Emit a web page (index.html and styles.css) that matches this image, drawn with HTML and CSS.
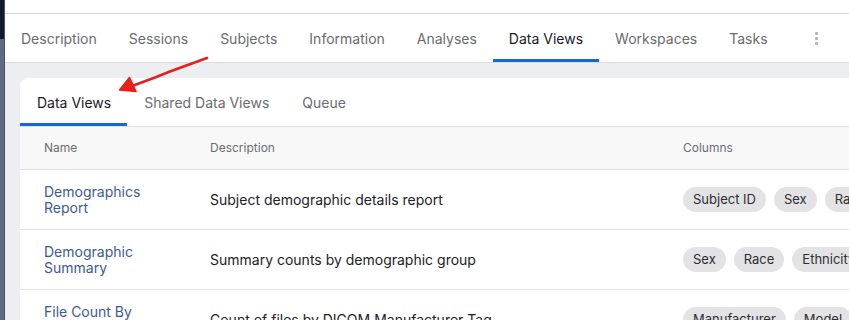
FILE: index.html
```html
<!DOCTYPE html>
<html lang="en">
<head>
<meta charset="utf-8">
<title>Data Views</title>
<link rel="stylesheet" href="styles.css">
</head>
<body>
<div class="app">
  <aside class="rail"><div class="rail-top"></div></aside>
  <main class="main">
    <div class="topbar"></div>
    <nav class="tabs">
      <a class="tab">Description</a>
      <a class="tab">Sessions</a>
      <a class="tab">Subjects</a>
      <a class="tab">Information</a>
      <a class="tab">Analyses</a>
      <a class="tab active">Data Views</a>
      <a class="tab">Workspaces</a>
      <a class="tab">Tasks</a>
      <a class="tab more"><span class="kebab"><i></i><i></i><i></i></span></a>
    </nav>
    <section class="content">
      <div class="card">
        <nav class="subtabs">
          <a class="subtab active">Data Views</a>
          <a class="subtab">Shared Data Views</a>
          <a class="subtab">Queue</a>
        </nav>
        <table class="grid">
          <colgroup><col class="c-name"><col class="c-desc"><col class="c-cols"></colgroup>
          <thead>
            <tr><th>Name</th><th>Description</th><th>Columns</th></tr>
          </thead>
          <tbody>
            <tr>
              <td><a class="link">Demographics Report</a></td>
              <td>Subject demographic details report</td>
              <td><div class="chips"><span class="chip">Subject ID</span><span class="chip">Sex</span><span class="chip">Race</span><span class="chip">Ethnicity</span></div></td>
            </tr>
            <tr>
              <td><a class="link">Demographic Summary</a></td>
              <td>Summary counts by demographic group</td>
              <td><div class="chips"><span class="chip">Sex</span><span class="chip">Race</span><span class="chip">Ethnicity</span></div></td>
            </tr>
            <tr>
              <td><a class="link">File Count By Manufacturer</a></td>
              <td>Count of files by DICOM Manufacturer Tag</td>
              <td><div class="chips"><span class="chip">Manufacturer</span><span class="chip">Model</span><span class="chip">Count</span></div></td>
            </tr>
          </tbody>
        </table>
      </div>
    </section>
  </main>
</div>
<svg class="arrow" width="849" height="320" viewBox="0 0 849 320" aria-hidden="true">
  <path d="M207 58 L185 66 L170 71.5 L155 77.5 L132 86" fill="none" stroke="#ea1e1a" stroke-width="2.6" stroke-linecap="round" stroke-linejoin="round"/>
  <path d="M119.5 90 L129.5 77.5 L136 91.5 Z" fill="#ea1e1a" stroke="#ea1e1a" stroke-width="1.6" stroke-linejoin="round"/>
</svg>
</body>
</html>
```
FILE: styles.css
```css
* { box-sizing: border-box; }
html, body { margin: 0; padding: 0; }
body {
  width: 849px;
  height: 320px;
  overflow: hidden;
  font-family: Inter, "Liberation Sans", sans-serif;
  background: #eceef1;
  position: relative;
}
.app { display: flex; height: 320px; }
.rail {
  width: 5px;
  flex: none;
  background: #5d6b84;
  border-right: 1px solid #44526b;
}
.rail-top { height: 39px; background: #111a2c; }
.main { flex: 1; min-width: 0; display: flex; flex-direction: column; min-height: 0; }
.topbar {
  flex: none;
  height: 14px;
  background: #fff;
  border-bottom: 1px solid #d9dade;
}
.tabs {
  flex: none;
  display: flex;
  height: 49px;
  background: #fff;
  border-bottom: 1px solid #dcdde1;
}
.tab {
  display: flex;
  align-items: center;
  padding: 3px 16px 0;
  font-size: 14px;
  color: #6b6b70;
  border-bottom: 3px solid transparent;
  white-space: nowrap;
}
.tab.active { color: #1b1b1f; border-bottom-color: #1565e0; }
.tab.more { padding: 3px 31px 0 31px; }
.kebab { display: flex; flex-direction: column; gap: 2px; }
.kebab i { display: block; width: 3px; height: 3px; background: #b4b4b8; border-radius: 1px; }
.content { padding: 15px 0 0 15px; flex: 1; min-height: 0; }
.card {
  width: 900px;
  background: #fff;
  border-radius: 8px 0 0 0;
  overflow: hidden;
}
.subtabs {
  display: flex;
  height: 49px;
  border-bottom: 1px solid #e0e0e3;
}
.subtab {
  display: flex;
  align-items: center;
  padding: 3px 16px 0 17px;
  font-size: 14px;
  color: #6b6b70;
  border-bottom: 3px solid transparent;
  white-space: nowrap;
}
.subtab.active { color: #1b1b1f; border-bottom-color: #1565e0; }
.grid {
  width: 900px;
  border-collapse: collapse;
  table-layout: fixed;
}
.c-name { width: 166px; }
.c-desc { width: 473px; }
.c-cols { width: 261px; }
.grid th {
  height: 42px;
  background: #f8f8f9;
  font-size: 12px;
  font-weight: 400;
  color: #6d6d72;
  text-align: left;
  padding: 0 24px;
  border-bottom: 1px solid #e2e2e5;
}
.grid td {
  padding: 14px 24px 13px;
  font-size: 14px;
  line-height: 16px;
  color: #222226;
  vertical-align: middle;
  border-bottom: 1px solid #e2e2e5;
  height: 59px;
}
.link { color: #3d5a98; }
.chips { display: flex; gap: 8px; white-space: nowrap; }
.chip {
  display: inline-block;
  background: #e3e3e5;
  color: #2e2e32;
  font-size: 13px;
  line-height: 17px;
  padding: 4px 10px;
  border-radius: 999px;
}
.arrow { position: absolute; left: 0; top: 0; pointer-events: none; }
```
